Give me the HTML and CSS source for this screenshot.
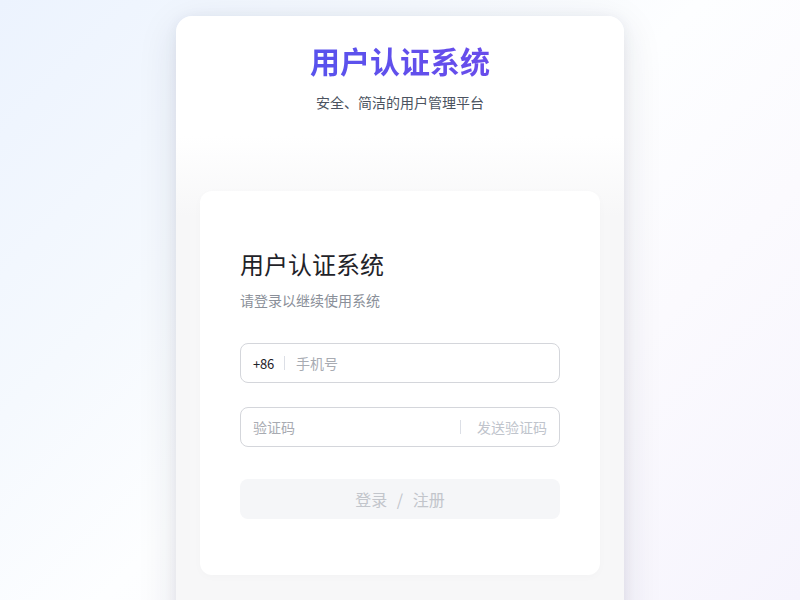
FILE: index.html
```html
<!DOCTYPE html>
<html lang="zh-CN">
<head>
<meta charset="utf-8">
<title>用户认证系统</title>
<link rel="stylesheet" href="styles.css">
</head>
<body>
<div class="page">
  <div class="shell">
    <header class="brand">
      <h1 class="brand-title">用户认证系统</h1>
      <p class="brand-sub">安全、简洁的用户管理平台</p>
    </header>
    <div class="panel">
      <h2 class="panel-title">用户认证系统</h2>
      <p class="panel-sub">请登录以继续使用系统</p>
      <div class="field">
        <span class="prefix">+86</span>
        <span class="sep"></span>
        <span class="ph">手机号</span>
      </div>
      <div class="field field-code">
        <span class="ph grow">验证码</span>
        <span class="sep"></span>
        <span class="send">发送验证码</span>
      </div>
      <button class="submit">登录 <span class="slash">/</span> 注册</button>
    </div>
  </div>
</div>
</body>
</html>
```

FILE: styles.css
```css
* { box-sizing: border-box; }
html, body { margin: 0; padding: 0; }
body {
  font-family: "Noto Sans CJK SC", "Noto Sans", sans-serif;
  width: 800px;
  height: 600px;
  overflow: hidden;
  background: linear-gradient(135deg, #ecf3fe 0%, #f5f9fe 30%, #fdfeff 50%, #fbfafe 70%, #f6f4fd 100%);
}
.page {
  height: 600px;
  padding-top: 16px;
  display: flex;
  justify-content: center;
}
.shell {
  width: 448px;
  height: 640px;
  border-radius: 16px;
  background: linear-gradient(180deg, #ffffff 0px, #ffffff 120px, #f7f7f8 200px, #f7f7f8 100%);
  box-shadow: 0 10px 40px rgba(30, 35, 60, 0.11), 0 2px 14px rgba(30, 35, 60, 0.06);
  padding: 23px 24px 0;
}
.brand { text-align: center; }
.brand-title {
  margin: 0;
  font-size: 30px;
  line-height: 42px;
  font-weight: 700;
  background: linear-gradient(90deg, #4f57ee 0%, #7248ea 100%);
  -webkit-background-clip: text;
  background-clip: text;
  color: transparent;
}
.brand-sub {
  margin: 11px 0 0;
  font-size: 14px;
  line-height: 20px;
  color: #4b5360;
}
.panel {
  margin-top: 79px;
  background: #fff;
  border-radius: 12px;
  padding: 57px 40px 56px;
  box-shadow: 0 2px 10px rgba(0, 0, 0, 0.02);
}
.panel-title {
  margin: 0;
  font-size: 24px;
  line-height: 32px;
  font-weight: 400;
  color: #1f2329;
}
.panel-sub {
  margin: 10px 0 0;
  font-size: 14px;
  line-height: 20px;
  color: #8a8f99;
}
.field {
  margin-top: 33px;
  height: 40px;
  border: 1px solid #d4d6db;
  border-radius: 8px;
  display: flex;
  align-items: center;
  padding: 0 12px;
  font-size: 14px;
}
.field.field-code { margin-top: 24px; }
.prefix { color: #1f2329; font-size: 13px; letter-spacing: -0.2px; }
.sep {
  width: 1px;
  height: 14px;
  background: #dcdfe6;
  margin: 0 11px 0 10px;
}
.field-code .sep { margin: 0 16px 0 0; }
.ph { color: #a8abb2; }
.grow { flex: 1; }
.send { color: #c0c4cc; }
.submit {
  display: block;
  width: 100%;
  margin-top: 32px;
  height: 40px;
  border: none;
  border-radius: 8px;
  background: #f5f6f8;
  color: #c2c5cb;
  font-family: inherit;
  font-size: 16px;
  padding: 0;
}
.slash { margin: 0 6px; }
```
